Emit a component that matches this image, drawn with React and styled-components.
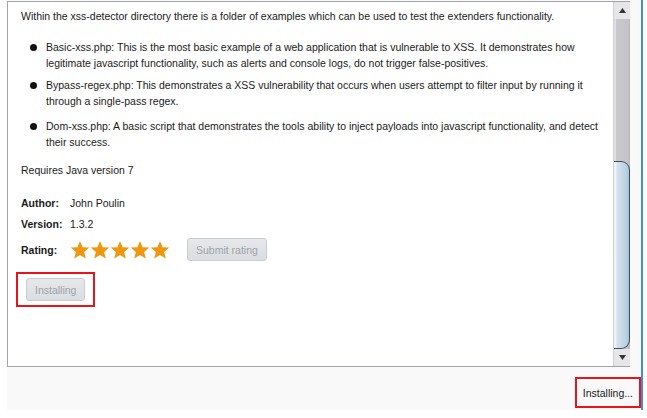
import React from 'react';
import styled, { createGlobalStyle } from 'styled-components';

const GlobalStyle = createGlobalStyle`
  html, body {
    margin: 0;
    padding: 0;
    background: #ffffff;
  }
  body {
    font-family: "Liberation Sans", Arial, sans-serif;
    font-size: 10.5px;
    color: #1a1a1a;
  }
`;

const Page = styled.div`
  display: flex;
  padding-left: 7px;
  width: 647px;
  height: 418px;
  box-sizing: border-box;
`;

const Frame = styled.div`
  display: flex;
  flex-direction: column;
  width: 634px;
  height: 410px;
  background: #f9f9f9;
  border-right: 2px solid #3b8de4;
`;

const ScrollPane = styled.div`
  display: flex;
  margin-top: 1px;
  width: 623px;
  height: 366px;
  box-sizing: border-box;
  border: 1px solid #a4a5ab;
  border-right: none;
  background: #ffffff;
`;

const Content = styled.div`
  flex: 1;
  padding: 6px 13px;
  overflow: hidden;
`;

const Para = styled.p`
  margin: 0 0 ${(p) => p.$gap || 0}px;
  line-height: 16px;
`;

const List = styled.ul`
  margin: 0 0 12px;
  padding: 0;
  list-style: none;
`;

const Item = styled.li`
  display: flex;
  margin-bottom: ${(p) => p.$gap}px;
  line-height: 16px;
`;

const Bullet = styled.span`
  flex: none;
  width: 7px;
  height: 7px;
  margin: 5px 9px 0 9px;
  border-radius: 50%;
  background: #111111;
`;

const Meta = styled.div`
  display: grid;
  grid-template-columns: 49px auto;
  align-items: center;
  row-gap: 5px;
  margin-top: 17px;
`;

const Label = styled.span`
  font-weight: bold;
  line-height: 16px;
  margin-top: ${(p) => p.$top || 0}px;
`;

const Value = styled.span`
  line-height: 16px;
`;

const RatingRow = styled.div`
  display: flex;
  align-items: center;
  gap: 17px;
  margin-top: 1px;
`;

const Stars = styled.div`
  display: flex;
`;

const Button = styled.button`
  font-family: inherit;
  font-size: 10.5px;
  color: #9ea2a8;
  height: 23px;
  padding: 0 ${(p) => p.$pad}px;
  border: 1px solid #c9ccd1;
  border-radius: 3px;
  background: linear-gradient(#e6e8eb, #dadde1);
`;

const Highlight = styled.div`
  display: inline-flex;
  align-items: center;
  justify-content: center;
  border: 2px solid #e8141c;
  padding: ${(p) => p.$pad};
`;

const InstallWrap = styled.div`
  margin-top: 11px;
  margin-left: -5px;
`;

const ScrollBar = styled.div`
  display: flex;
  flex-direction: column;
  width: 16px;
  background: linear-gradient(90deg, #e0e0e4 0 2px, #c9c9ce 2px, #c3c3c8 14px, #b7b7bc);
  border-left: 1px solid #d0d0d4;
`;

const Arrow = styled.div`
  display: flex;
  align-items: center;
  justify-content: center;
  height: 17px;
  background: #e6e6e9;
`;

const Track = styled.div`
  flex: 1;
  display: flex;
  flex-direction: column;
  justify-content: flex-end;
`;

const Thumb = styled.div`
  height: ${(p) => p.$size}px;
  box-sizing: border-box;
  border: 1px solid #3f4c5a;
  border-left: none;
  border-radius: 0 9px 9px 0;
  background: linear-gradient(90deg, #eef3f8 0 2px, #d4e2ee 3px, #bcd1e4 12px, #a9c2d8);
`;

const Footer = styled.div`
  flex: 1;
  display: flex;
  justify-content: flex-end;
  align-items: flex-end;
  padding: 0 0 2px;
`;

const Status = styled.span`
  color: #1a1a1a;
`;

const Star = () => (
  <svg width="20" height="20" viewBox="0 0 20 20">
    <polygon
      points="10,1 12.6,7.2 19.3,7.6 14.1,11.9 15.8,18.5 10,14.9 4.2,18.5 5.9,11.9 0.7,7.6 7.4,7.2"
      fill="#f0970f"
    />
  </svg>
);

const bullets = [
  {
    text: 'Basic-xss.php: This is the most basic example of a web application that is vulnerable to XSS. It demonstrates how legitimate javascript functionality, such as alerts and console logs, do not trigger false-positives.',
    gap: 6,
  },
  {
    text: 'Bypass-regex.php: This demonstrates a XSS vulnerability that occurs when users attempt to filter input by running it through a single-pass regex.',
    gap: 9,
  },
  {
    text: 'Dom-xss.php: A basic script that demonstrates the tools ability to inject payloads into javascript functionality, and detect their success.',
    gap: 0,
  },
];

export default function App() {
  return (
    <>
      <GlobalStyle />
      <Page>
        <Frame>
          <ScrollPane>
            <Content>
              <Para $gap={15}>
                Within the xss-detector directory there is a folder of examples which can be used to test the extenders functionality.
              </Para>
              <List>
                {bullets.map((b) => (
                  <Item key={b.text} $gap={b.gap}>
                    <Bullet />
                    <span>{b.text}</span>
                  </Item>
                ))}
              </List>
              <Para>Requires Java version 7</Para>
              <Meta>
                <Label>Author:</Label>
                <Value>John Poulin</Value>
                <Label>Version:</Label>
                <Value>1.3.2</Value>
                <Label $top={1}>Rating:</Label>
                <RatingRow>
                  <Stars>
                    {[0, 1, 2, 3, 4].map((i) => (
                      <Star key={i} />
                    ))}
                  </Stars>
                  <Button $pad={8}>Submit rating</Button>
                </RatingRow>
              </Meta>
              <InstallWrap>
                <Highlight $pad="4px 8px">
                  <Button $pad={8}>Installing</Button>
                </Highlight>
              </InstallWrap>
            </Content>
            <ScrollBar>
              <Arrow>
                <svg width="7" height="5" viewBox="0 0 7 5">
                  <polygon points="3.5,0 7,5 0,5" fill="#333" />
                </svg>
              </Arrow>
              <Track>
                <Thumb $size={188} />
              </Track>
              <Arrow>
                <svg width="7" height="5" viewBox="0 0 7 5">
                  <polygon points="0,0 7,0 3.5,5" fill="#333" />
                </svg>
              </Arrow>
            </ScrollBar>
          </ScrollPane>
          <Footer>
            <Highlight $pad="8px 6px 7px 6px">
              <Status>Installing...</Status>
            </Highlight>
          </Footer>
        </Frame>
      </Page>
    </>
  );
}
